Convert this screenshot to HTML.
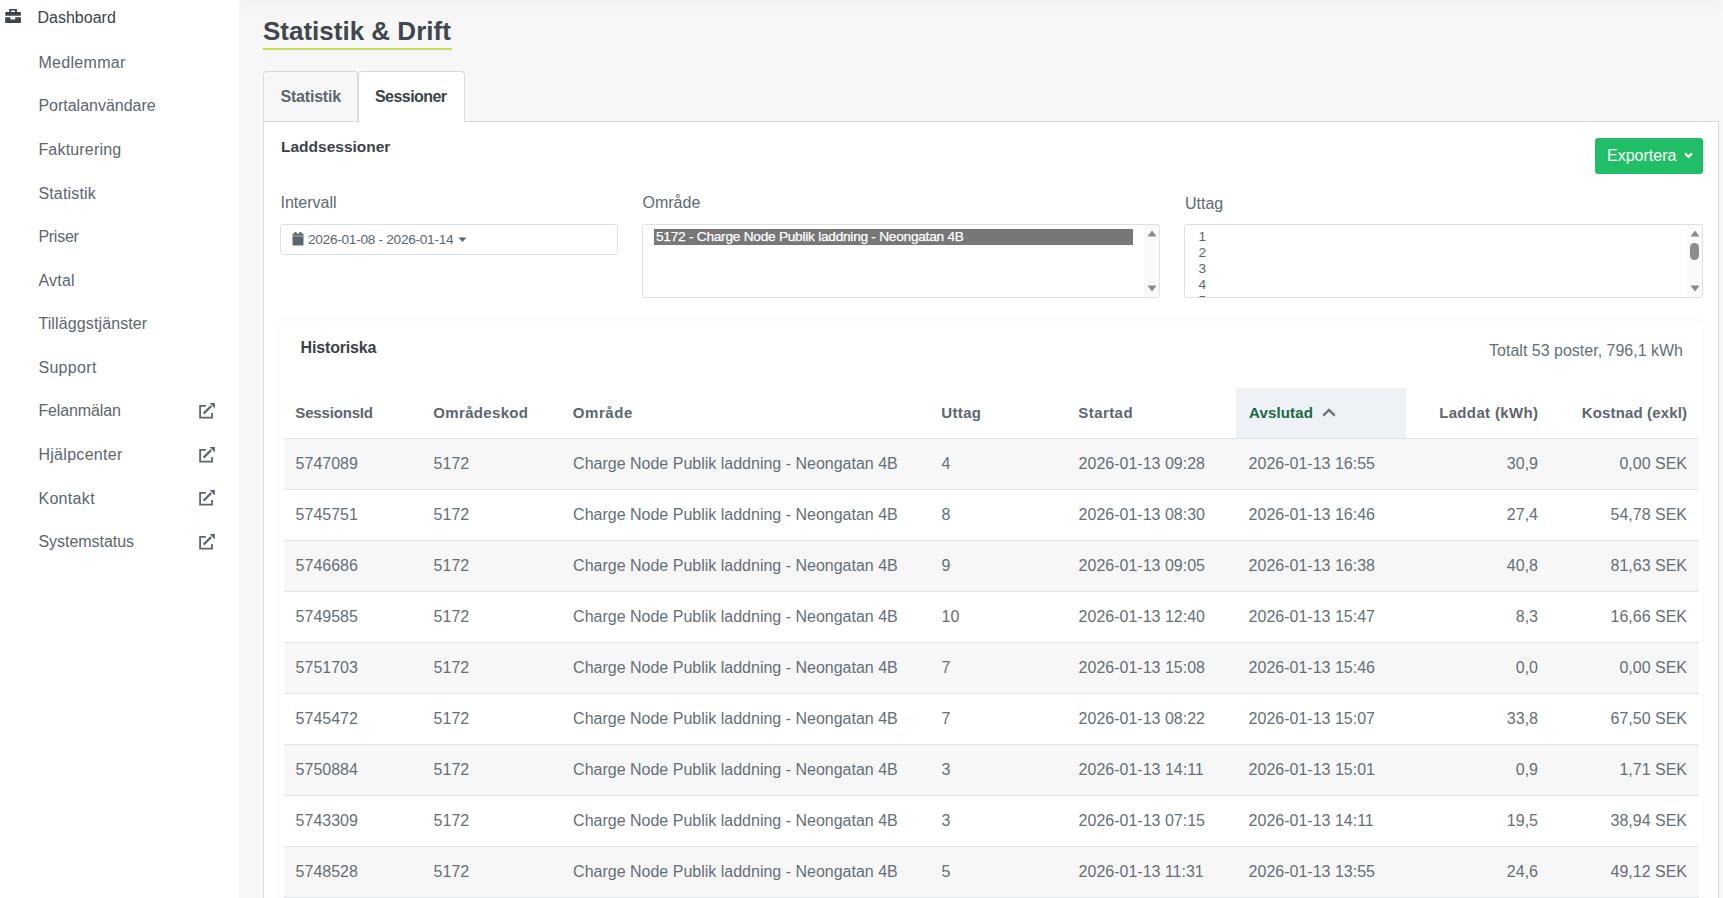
<!DOCTYPE html>
<html><head><meta charset="utf-8"><style>
*{box-sizing:border-box}
html,body{margin:0;padding:0}
body{width:1723px;height:898px;overflow:hidden;background:#f7f7f7;font-family:"Liberation Sans",sans-serif;position:relative}
.topshadow{position:absolute;left:239px;top:-30px;width:1484px;height:30px;background:#fff;box-shadow:0 0 20px rgba(0,0,0,.055);z-index:5}
.sidebar{position:absolute;left:0;top:0;width:239px;height:898px;background:#fff}
.si{position:absolute;left:38.4px;font-size:16px;line-height:20px;color:#5b6670;white-space:nowrap}
.si.dash{left:37.5px;color:#3b4249}
.ext{position:absolute;left:198px;width:18px;height:17px}
.ext svg{display:block}
.title{position:absolute;left:263px;top:15.69px;font-size:26px;line-height:30px;font-weight:bold;color:#40474f;white-space:nowrap}
.uline{position:absolute;left:263px;top:48px;width:189px;height:2px;background:#c3e150}
.tab{position:absolute;top:71px;height:51px;border:1px solid #d4dbe3;border-bottom:none;border-radius:4px 4px 0 0;font-size:15.5px;font-weight:bold;white-space:nowrap}
.card{position:absolute;left:263px;top:121px;width:1456px;height:800px;background:#fff;border:1px solid #d4dbe3}
.abs{position:absolute;white-space:nowrap}
.lbl{position:absolute;font-size:16px;line-height:20px;color:#5e6a74;white-space:nowrap}
.inp{position:absolute;border:1px solid #d9e1e8;border-radius:3px;background:#fff}
.hist{position:absolute;left:280px;top:322px;width:1423px;height:700px;background:#fff;border-radius:4px;box-shadow:0 0 12px rgba(0,0,0,.035)}
.table{position:absolute;left:284px;top:388px;width:1415px;height:600px}
.thead{position:absolute;left:0;top:0;width:1415px;height:51px;border-bottom:1px solid #dde4eb}
.h{position:absolute;top:14.6px;font-size:15px;line-height:20px;font-weight:bold;color:#5b6670;white-space:nowrap}
.h.r,.c.r{left:auto}
.sorted{color:#176a42}
.row{position:absolute;left:0;width:1415px;height:51px;border-bottom:1px solid #dde4eb}
.c{position:absolute;top:15.46px;font-size:16px;line-height:20px;color:#646f79;white-space:nowrap}
</style></head><body>
<div class="topshadow"></div>
<div class="sidebar">
<div class="si dash" style="top:7.86px">Dashboard</div><svg class="brief" width="17" height="15" viewBox="0 0 17 15" style="position:absolute;left:4px;top:8px"><path d="M5.2 1H12.9V4H11V2.4H7.1V4H5.2Z" fill="#3d444c"/><rect x="1.2" y="4" width="15.7" height="3.7" rx="0.6" fill="#3d444c"/><path d="M1.2 9.2H6.4V11.4H11.2V9.2H16.9V14.9H1.2Z" fill="#3d444c"/></svg><div class="si" style="top:52.86px;letter-spacing:0.31px">Medlemmar</div><div class="si" style="top:96.43px;letter-spacing:-0.01px">Portalanvändare</div><div class="si" style="top:140.0px;letter-spacing:0.19px">Fakturering</div><div class="si" style="top:183.57px;letter-spacing:0.17px">Statistik</div><div class="si" style="top:227.14px;letter-spacing:-0.26px">Priser</div><div class="si" style="top:270.71px;letter-spacing:0.25px">Avtal</div><div class="si" style="top:314.28px;letter-spacing:0.12px">Tilläggstjänster</div><div class="si" style="top:357.85px;letter-spacing:0.33px">Support</div><div class="si" style="top:401.42px;letter-spacing:-0.11px">Felanmälan</div><div class="ext" style="top:402.96px"><svg width="18" height="17" viewBox="0 0 18 17"><path d="M7.9 2.85H2.1V14.7H14.05V10" fill="none" stroke="#5b6670" stroke-width="1.8"/><path d="M5.6 10.6L13.2 3" stroke="#5b6670" stroke-width="2.2"/><path d="M11.7 0H16.9V5.4Z" fill="#5b6670"/></svg></div><div class="si" style="top:444.99px;letter-spacing:0.3px">Hjälpcenter</div><div class="ext" style="top:446.53px"><svg width="18" height="17" viewBox="0 0 18 17"><path d="M7.9 2.85H2.1V14.7H14.05V10" fill="none" stroke="#5b6670" stroke-width="1.8"/><path d="M5.6 10.6L13.2 3" stroke="#5b6670" stroke-width="2.2"/><path d="M11.7 0H16.9V5.4Z" fill="#5b6670"/></svg></div><div class="si" style="top:488.56px;letter-spacing:0.33px">Kontakt</div><div class="ext" style="top:490.1px"><svg width="18" height="17" viewBox="0 0 18 17"><path d="M7.9 2.85H2.1V14.7H14.05V10" fill="none" stroke="#5b6670" stroke-width="1.8"/><path d="M5.6 10.6L13.2 3" stroke="#5b6670" stroke-width="2.2"/><path d="M11.7 0H16.9V5.4Z" fill="#5b6670"/></svg></div><div class="si" style="top:532.13px;letter-spacing:-0.03px">Systemstatus</div><div class="ext" style="top:533.67px"><svg width="18" height="17" viewBox="0 0 18 17"><path d="M7.9 2.85H2.1V14.7H14.05V10" fill="none" stroke="#5b6670" stroke-width="1.8"/><path d="M5.6 10.6L13.2 3" stroke="#5b6670" stroke-width="2.2"/><path d="M11.7 0H16.9V5.4Z" fill="#5b6670"/></svg></div>
</div>
<div class="title">Statistik &amp; Drift</div>
<div class="uline"></div>
<div class="card"></div>
<div class="tab" style="left:263px;width:95px;background:#f7f7f7;height:50px;color:#5b6670"><span class="abs" style="left:16.5px;top:14.56px;line-height:20px;font-size:16px;letter-spacing:-0.2px">Statistik</span></div>
<div class="tab" style="left:358px;width:107px;background:#fff;color:#3b4249"><span class="abs" style="left:16px;top:14.56px;line-height:20px;font-size:16px;letter-spacing:-0.55px">Sessioner</span></div>
<div class="abs" style="left:281px;top:137.13px;font-size:15.5px;line-height:20px;font-weight:bold;color:#3b4249">Laddsessioner</div>
<div class="abs" style="left:1595px;top:138px;width:108px;height:36px;background:#21be68;border-radius:3px;color:#fff;font-size:16px;line-height:20px">
 <span class="abs" style="left:12px;top:7.96px">Exportera</span>
 <svg class="abs" style="left:89px;top:14px" width="9" height="7" viewBox="0 0 9 7"><path d="M1.1 1.4L4.5 4.8L7.9 1.4" fill="none" stroke="#fff" stroke-width="2.3"/></svg>
</div>
<div class="lbl" style="left:280.5px;top:193.36px">Intervall</div>
<div class="lbl" style="left:642.5px;top:193.16px">Område</div>
<div class="lbl" style="left:1185px;top:193.86px">Uttag</div>
<div class="inp" style="left:280px;top:224px;width:338px;height:31px">
 <svg class="abs" style="left:11px;top:6.5px" width="12" height="14" viewBox="0 0 12 14"><rect x="0.5" y="1.5" width="11" height="12" rx="1" fill="#5b6670"/><rect x="2.5" y="0" width="2" height="3" fill="#5b6670"/><rect x="7.5" y="0" width="2" height="3" fill="#5b6670"/><rect x="0.5" y="3.6" width="11" height="0.8" fill="#fff" opacity=".6"/></svg>
 <span class="abs" style="left:27px;top:5.65px;font-size:13.7px;letter-spacing:-0.3px;line-height:18px;color:#5b6670">2026-01-08 - 2026-01-14</span>
 <svg class="abs" style="left:177px;top:12px" width="9" height="6" viewBox="0 0 9 6"><path d="M0.5 0.5H8.5L4.5 5Z" fill="#5b6670"/></svg>
</div>
<div class="inp" style="left:642px;top:224px;width:518px;height:74px;overflow:hidden">
 <div class="abs" style="left:11px;top:4px;width:479px;height:16px;background:#777"></div>
 <span class="abs" style="left:13px;top:4.15px;font-size:13.7px;letter-spacing:-0.26px;line-height:16px;color:#fff;-webkit-text-stroke:0.25px #fff">5172 - Charge Node Publik laddning - Neongatan 4B</span>
 <div class="abs" style="left:501px;top:0;width:16px;height:72px;background:#fafafa"></div>
 <svg class="abs" style="left:503.5px;top:5px" width="10" height="7" viewBox="0 0 10 7"><path d="M0.5 6.5H9.5L5 0.5Z" fill="#8a8a8a"/></svg>
 <svg class="abs" style="left:503.5px;top:60px" width="10" height="7" viewBox="0 0 10 7"><path d="M0.5 0.5H9.5L5 6.5Z" fill="#8a8a8a"/></svg>
</div>
<div class="inp" style="left:1184px;top:224px;width:519px;height:74px;overflow:hidden;font-size:13.7px;color:#5b6670">
 <div style="position:absolute;left:14px;top:4px;height:16px;line-height:16px;margin-left:-0.5px">1</div><div style="position:absolute;left:14px;top:20px;height:16px;line-height:16px;margin-left:-0.5px">2</div><div style="position:absolute;left:14px;top:36px;height:16px;line-height:16px;margin-left:-0.5px">3</div><div style="position:absolute;left:14px;top:52px;height:16px;line-height:16px;margin-left:-0.5px">4</div><div style="position:absolute;left:14px;top:68px;height:16px;line-height:16px;margin-left:-0.5px">5</div>
 <div class="abs" style="left:502px;top:0;width:16px;height:72px;background:#fafafa"></div>
 <svg class="abs" style="left:504.5px;top:5px" width="10" height="7" viewBox="0 0 10 7"><path d="M0.5 6.5H9.5L5 0.5Z" fill="#8a8a8a"/></svg>
 <div class="abs" style="left:504.5px;top:18px;width:9px;height:17px;border-radius:5px;background:#8c8c8c"></div>
 <svg class="abs" style="left:504.5px;top:60px" width="10" height="7" viewBox="0 0 10 7"><path d="M0.5 0.5H9.5L5 6.5Z" fill="#8a8a8a"/></svg>
</div>
<div class="hist"></div>
<div class="abs" style="left:300.5px;top:337.56px;font-size:16px;letter-spacing:-0.15px;line-height:20px;font-weight:bold;color:#3b4249">Historiska</div>
<div class="abs" style="right:40px;top:341.36px;font-size:16px;line-height:20px;color:#646f79">Totalt 53 poster, 796,1 kWh</div>
<div class="table">
 <div class="abs" style="left:952px;top:0;width:170px;height:50px;background:#eef1f5"></div>
 <div class="thead"><span class="h" style="left:11.3px;letter-spacing:-0.17px">SessionsId</span><span class="h" style="left:149.3px;letter-spacing:0.33px">Områdeskod</span><span class="h" style="left:288.8px;letter-spacing:0.55px">Område</span><span class="h" style="left:657.3px;letter-spacing:0.34px">Uttag</span><span class="h" style="left:794.3px;letter-spacing:0.43px">Startad</span><span class="h sorted" style="left:965px;letter-spacing:0.15px">Avslutad</span><svg style="position:absolute;left:1038px;top:20px" width="14" height="9" viewBox="0 0 14 9"><path d="M1.3 7.6L7 1.9L12.7 7.6" fill="none" stroke="#6b7580" stroke-width="2.4"/></svg><span class="h r" style="right:160.65px;letter-spacing:0.35px">Laddat (kWh)</span><span class="h r" style="right:11.85px;letter-spacing:0.15px">Kostnad (exkl)</span></div>
 <div class="row" style="top:51px;background:#f7f7f7"><span class="c" style="left:11.6px">5747089</span><span class="c" style="left:149.6px">5172</span><span class="c" style="left:289.1px">Charge Node Publik laddning - Neongatan 4B</span><span class="c" style="left:657.6px">4</span><span class="c" style="left:794.6px">2026-01-13 09:28</span><span class="c" style="left:964.6px">2026-01-13 16:55</span><span class="c r" style="right:161px">30,9</span><span class="c r" style="right:12px">0,00 SEK</span></div><div class="row" style="top:102px;background:#fff"><span class="c" style="left:11.6px">5745751</span><span class="c" style="left:149.6px">5172</span><span class="c" style="left:289.1px">Charge Node Publik laddning - Neongatan 4B</span><span class="c" style="left:657.6px">8</span><span class="c" style="left:794.6px">2026-01-13 08:30</span><span class="c" style="left:964.6px">2026-01-13 16:46</span><span class="c r" style="right:161px">27,4</span><span class="c r" style="right:12px">54,78 SEK</span></div><div class="row" style="top:153px;background:#f7f7f7"><span class="c" style="left:11.6px">5746686</span><span class="c" style="left:149.6px">5172</span><span class="c" style="left:289.1px">Charge Node Publik laddning - Neongatan 4B</span><span class="c" style="left:657.6px">9</span><span class="c" style="left:794.6px">2026-01-13 09:05</span><span class="c" style="left:964.6px">2026-01-13 16:38</span><span class="c r" style="right:161px">40,8</span><span class="c r" style="right:12px">81,63 SEK</span></div><div class="row" style="top:204px;background:#fff"><span class="c" style="left:11.6px">5749585</span><span class="c" style="left:149.6px">5172</span><span class="c" style="left:289.1px">Charge Node Publik laddning - Neongatan 4B</span><span class="c" style="left:657.6px">10</span><span class="c" style="left:794.6px">2026-01-13 12:40</span><span class="c" style="left:964.6px">2026-01-13 15:47</span><span class="c r" style="right:161px">8,3</span><span class="c r" style="right:12px">16,66 SEK</span></div><div class="row" style="top:255px;background:#f7f7f7"><span class="c" style="left:11.6px">5751703</span><span class="c" style="left:149.6px">5172</span><span class="c" style="left:289.1px">Charge Node Publik laddning - Neongatan 4B</span><span class="c" style="left:657.6px">7</span><span class="c" style="left:794.6px">2026-01-13 15:08</span><span class="c" style="left:964.6px">2026-01-13 15:46</span><span class="c r" style="right:161px">0,0</span><span class="c r" style="right:12px">0,00 SEK</span></div><div class="row" style="top:306px;background:#fff"><span class="c" style="left:11.6px">5745472</span><span class="c" style="left:149.6px">5172</span><span class="c" style="left:289.1px">Charge Node Publik laddning - Neongatan 4B</span><span class="c" style="left:657.6px">7</span><span class="c" style="left:794.6px">2026-01-13 08:22</span><span class="c" style="left:964.6px">2026-01-13 15:07</span><span class="c r" style="right:161px">33,8</span><span class="c r" style="right:12px">67,50 SEK</span></div><div class="row" style="top:357px;background:#f7f7f7"><span class="c" style="left:11.6px">5750884</span><span class="c" style="left:149.6px">5172</span><span class="c" style="left:289.1px">Charge Node Publik laddning - Neongatan 4B</span><span class="c" style="left:657.6px">3</span><span class="c" style="left:794.6px">2026-01-13 14:11</span><span class="c" style="left:964.6px">2026-01-13 15:01</span><span class="c r" style="right:161px">0,9</span><span class="c r" style="right:12px">1,71 SEK</span></div><div class="row" style="top:408px;background:#fff"><span class="c" style="left:11.6px">5743309</span><span class="c" style="left:149.6px">5172</span><span class="c" style="left:289.1px">Charge Node Publik laddning - Neongatan 4B</span><span class="c" style="left:657.6px">3</span><span class="c" style="left:794.6px">2026-01-13 07:15</span><span class="c" style="left:964.6px">2026-01-13 14:11</span><span class="c r" style="right:161px">19,5</span><span class="c r" style="right:12px">38,94 SEK</span></div><div class="row" style="top:459px;background:#f7f7f7"><span class="c" style="left:11.6px">5748528</span><span class="c" style="left:149.6px">5172</span><span class="c" style="left:289.1px">Charge Node Publik laddning - Neongatan 4B</span><span class="c" style="left:657.6px">5</span><span class="c" style="left:794.6px">2026-01-13 11:31</span><span class="c" style="left:964.6px">2026-01-13 13:55</span><span class="c r" style="right:161px">24,6</span><span class="c r" style="right:12px">49,12 SEK</span></div>
</div>
</body></html>
